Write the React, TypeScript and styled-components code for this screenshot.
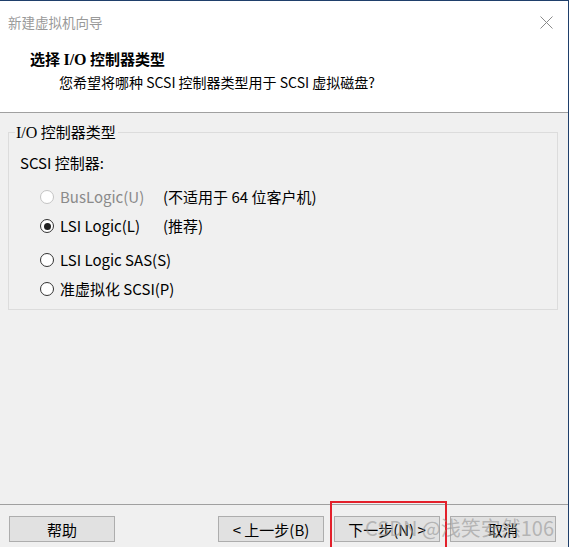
import React from 'react';
import styled, { createGlobalStyle } from 'styled-components';

const GlobalStyle = createGlobalStyle`
  html, body {
    margin: 0;
    padding: 0;
    background: #f0f0f0;
  }

  body {
    font-family: "Noto Sans CJK SC", "Noto Sans", sans-serif;
    font-size: 14px;
    color: #000;
  }
`;

const Window = styled.div`
  position: relative;
  width: 569px;
  height: 547px;
  box-sizing: border-box;
  border-top: 1px solid #1f3f6b;
  border-right: 1px solid #1f3f6b;
  background: #f0f0f0;
  display: flex;
  flex-direction: column;
  overflow: hidden;
`;

const Header = styled.div`
  background: #fff;
  border-bottom: 1px solid #a0a0a0;
  height: 112px;
  box-sizing: border-box;
`;

const TitleBar = styled.div`
  height: 42px;
  padding: 0 15px 0 8px;
  display: flex;
  align-items: center;
  justify-content: space-between;
  color: #999;
  font-size: 13.5px;
`;

const Heading = styled.div`
  padding-top: 5px;
  line-height: 22px;
`;

const Title = styled.div`
  padding-left: 30px;
  font-weight: 700;
  font-size: 15px;
`;

const Subtitle = styled.div`
  padding-left: 59px;
  font-size: 14px;
`;

const Serif = styled.span`
  font-family: "Liberation Serif", serif;
  font-size: 16px;
`;

const Body = styled.div`
  flex: 1;
  padding: 8px 10px 0 8px;
  font-size: 15px;
`;

const Group = styled.fieldset`
  margin: 0;
  padding: 0 0 10px 6px;
  min-width: 0;
  border: 1px solid #dcdcdc;
`;

const Legend = styled.legend`
  padding: 0 2px 0 1px;
  line-height: 22px;
  font-size: 15px;
`;

const SectionLabel = styled.div`
  margin: 9px 0 0 5px;
  line-height: 20px;
`;

const OptionRow = styled.div<{ $gap: number }>`
  display: flex;
  align-items: center;
  margin: ${(p) => p.$gap}px 0 0 25px;
  line-height: 20px;
  white-space: nowrap;
`;

const RadioDot = styled.span<{ $checked?: boolean; $disabled?: boolean }>`
  position: relative;
  width: 14px;
  height: 14px;
  box-sizing: border-box;
  border-radius: 50%;
  border: 1px solid ${(p) => (p.$disabled ? '#c4c4c4' : '#333')};
  background: #fff;
  margin-right: 6px;
  flex: none;

  &::after {
    content: '';
    display: ${(p) => (p.$checked ? 'block' : 'none')};
    position: absolute;
    left: 2.5px;
    top: 2.5px;
    width: 7px;
    height: 7px;
    border-radius: 50%;
    background: #222;
  }
`;

const OptionText = styled.span<{ $disabled?: boolean }>`
  min-width: 103px;
  color: ${(p) => (p.$disabled ? '#8a8a8a' : '#000')};
`;

const Note = styled.span``;

const Footer = styled.div`
  height: 43px;
  box-sizing: border-box;
  border-top: 1px solid #a0a0a0;
  padding: 11px 12px 0 9px;
  display: flex;
  justify-content: space-between;
  align-items: flex-start;
`;

const ButtonGroup = styled.div`
  display: flex;
  gap: 10px;
`;

const Button = styled.button`
  width: 106px;
  height: 26px;
  padding: 0;
  border: 1px solid #adadad;
  background: #e1e1e1;
  font-family: "Noto Sans CJK SC", "Noto Sans", sans-serif;
  font-size: 15px;
  color: #000;
`;

const Highlight = styled.div`
  position: absolute;
  left: 330px;
  top: 500px;
  width: 117px;
  height: 60px;
  box-sizing: border-box;
  border: 2px solid #e3202b;
  pointer-events: none;
`;

const Watermark = styled.div`
  position: absolute;
  left: 365px;
  top: 513px;
  font-family: "Noto Sans CJK SC", "Liberation Sans", sans-serif;
  font-size: 20px;
  line-height: 28px;
  color: rgba(150, 150, 150, 0.6);
  white-space: nowrap;
  pointer-events: none;
`;

function CloseIcon() {
  return (
    <svg width="13" height="13" viewBox="0 0 13 13">
      <path d="M0.5 0.5 L12.5 12.5 M12.5 0.5 L0.5 12.5" stroke="#8a8a8a" strokeWidth="1" fill="none" />
    </svg>
  );
}

const options = [
  { label: 'BusLogic(U)', note: '(不适用于 64 位客户机)', disabled: true, gap: 14 },
  { label: 'LSI Logic(L)', note: '(推荐)', checked: true, gap: 9 },
  { label: 'LSI Logic SAS(S)', gap: 14 },
  { label: '准虚拟化 SCSI(P)', gap: 9 },
];

export default function App() {
  return (
    <>
      <GlobalStyle />
      <Window>
        <Header>
          <TitleBar>
            <span>新建虚拟机向导</span>
            <CloseIcon />
          </TitleBar>
          <Heading>
            <Title>
              选择 <Serif>I/O</Serif> 控制器类型
            </Title>
            <Subtitle>您希望将哪种 SCSI 控制器类型用于 SCSI 虚拟磁盘?</Subtitle>
          </Heading>
        </Header>

        <Body>
          <Group>
            <Legend>
              <Serif>I/O</Serif> 控制器类型
            </Legend>
            <SectionLabel>SCSI 控制器:</SectionLabel>
            {options.map((o) => (
              <OptionRow key={o.label} $gap={o.gap}>
                <RadioDot $checked={o.checked} $disabled={o.disabled} />
                <OptionText $disabled={o.disabled}>{o.label}</OptionText>
                {o.note && <Note>{o.note}</Note>}
              </OptionRow>
            ))}
          </Group>
        </Body>

        <Footer>
          <Button>帮助</Button>
          <ButtonGroup>
            <Button>&lt; 上一步(B)</Button>
            <Button>下一步(N) &gt;</Button>
            <Button>取消</Button>
          </ButtonGroup>
        </Footer>

        <Highlight />
        <Watermark>CSDN @浅笑安然106</Watermark>
      </Window>
    </>
  );
}
